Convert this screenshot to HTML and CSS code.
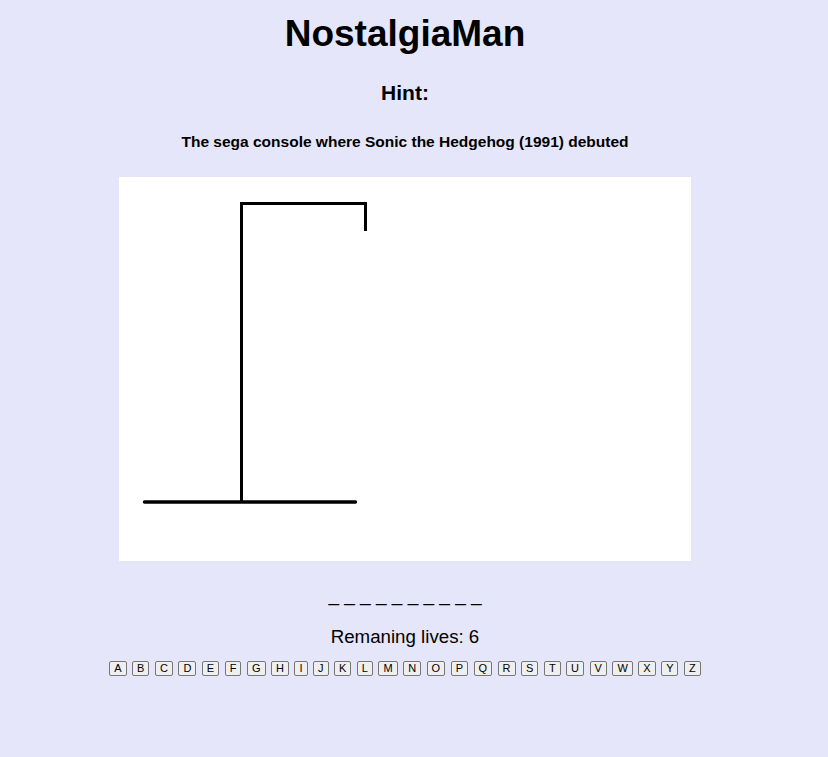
FILE: index.html
```html
<!DOCTYPE html>
<html lang="en">
<head>
<meta charset="utf-8">
<title>NostalgiaMan</title>
<link rel="stylesheet" href="styles.css">
</head>
<body>
<main class="game">
  <h1 class="title">NostalgiaMan</h1>
  <h2 class="hint-label">Hint:</h2>
  <p class="hint-text">The sega console where Sonic the Hedgehog (1991) debuted</p>
  <div class="board">
    <svg class="gallows" width="572" height="384" viewBox="0 0 572 384" xmlns="http://www.w3.org/2000/svg">
      <path d="M122.5 325 L122.5 26.5 L246.5 26.5 L246.5 54" fill="none" stroke="#000" stroke-width="3" stroke-linejoin="miter" stroke-linecap="butt"/>
      <path d="M25.5 325 L236.5 325" fill="none" stroke="#000" stroke-width="3.4" stroke-linecap="round"/>
    </svg>
  </div>
  <p class="word">_ _ _ _ _ _ _ _ _ _</p>
  <p class="lives">Remaning lives: 6</p>
  <div class="letters">
    <button class="key">A</button>
    <button class="key">B</button>
    <button class="key">C</button>
    <button class="key">D</button>
    <button class="key">E</button>
    <button class="key">F</button>
    <button class="key">G</button>
    <button class="key">H</button>
    <button class="key">I</button>
    <button class="key">J</button>
    <button class="key">K</button>
    <button class="key">L</button>
    <button class="key">M</button>
    <button class="key">N</button>
    <button class="key">O</button>
    <button class="key">P</button>
    <button class="key">Q</button>
    <button class="key">R</button>
    <button class="key">S</button>
    <button class="key">T</button>
    <button class="key">U</button>
    <button class="key">V</button>
    <button class="key">W</button>
    <button class="key">X</button>
    <button class="key">Y</button>
    <button class="key">Z</button>
  </div>
</main>
</body>
</html>
```
FILE: styles.css
```css
html, body {
  margin: 0;
  padding: 0;
  background: #e6e6fa;
}

body {
  font-family: "Liberation Sans", Arial, sans-serif;
  color: #000;
}

.game {
  width: 810px;
  display: flex;
  flex-direction: column;
  align-items: center;
  text-align: center;
}

.title {
  margin: 12px 0 0;
  font-size: 37px;
  line-height: 43px;
  font-weight: bold;
}

.hint-label {
  margin: 26px 0 0;
  font-size: 21px;
  line-height: 24px;
  font-weight: bold;
}

.hint-text {
  margin: 28px 0 0;
  font-size: 15.5px;
  line-height: 18px;
  font-weight: bold;
}

.board {
  margin-top: 26px;
  width: 572px;
  height: 384px;
  background: #fff;
}

.gallows {
  display: block;
}

.word {
  margin: 23px 0 0;
  font-size: 19px;
  line-height: 22px;
}

.lives {
  margin: 20px 0 0;
  font-size: 18.7px;
  line-height: 22px;
}

.letters {
  margin-top: 13px;
  display: flex;
  gap: 5.5px;
}

.key {
  font-family: "Liberation Sans", Arial, sans-serif;
  font-size: 11px;
  line-height: 13px;
  height: 15px;
  padding: 0 4px;
  margin: 0;
  border: 1px solid #767676;
  border-radius: 2px;
  background: #efefef;
  color: #000;
}
```
